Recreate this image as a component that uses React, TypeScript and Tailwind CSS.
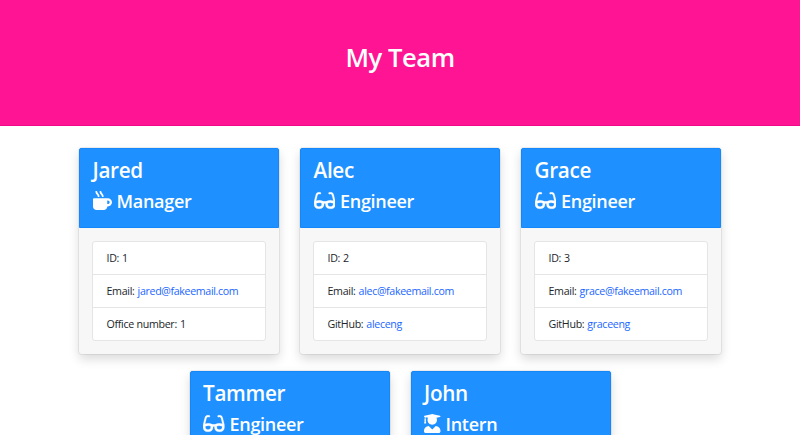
import type { IconType } from 'react-icons';
import { FaGlasses, FaMugHot, FaUserGraduate } from 'react-icons/fa';

type Detail = { label: string; value: string; link?: boolean };

type Member = {
  name: string;
  role: string;
  details: Detail[];
};

const icons: Record<string, { Icon: IconType; size: string }> = {
  Manager: { Icon: FaMugHot, size: 'mb-[2px] h-[19px] w-[19px]' },
  Engineer: { Icon: FaGlasses, size: 'mb-px h-[19px] w-[21.5px] stroke-white stroke-[6px]' },
  Intern: { Icon: FaUserGraduate, size: 'mb-px h-[19px] w-[16.5px]' },
};

const team: Member[] = [
  {
    name: 'Jared',
    role: 'Manager',
    details: [
      { label: 'ID:', value: '1' },
      { label: 'Email:', value: 'jared@fakeemail.com', link: true },
      { label: 'Office number:', value: '1' },
    ],
  },
  {
    name: 'Alec',
    role: 'Engineer',
    details: [
      { label: 'ID:', value: '2' },
      { label: 'Email:', value: 'alec@fakeemail.com', link: true },
      { label: 'GitHub:', value: 'aleceng', link: true },
    ],
  },
  {
    name: 'Grace',
    role: 'Engineer',
    details: [
      { label: 'ID:', value: '3' },
      { label: 'Email:', value: 'grace@fakeemail.com', link: true },
      { label: 'GitHub:', value: 'graceeng', link: true },
    ],
  },
  { name: 'Tammer', role: 'Engineer', details: [] },
  { name: 'John', role: 'Intern', details: [] },
];

function Card({ member }: { member: Member }) {
  const { name, role, details } = member;
  const { Icon, size } = icons[role];
  return (
    <article className="h-[205.5px] w-[200px] rounded-[3px] bg-[#f7f7f7] shadow-[0_0_0_1px_rgba(0,0,0,0.06),0_5px_11px_rgba(0,0,0,0.15)]">
      <header className="h-[80px] rounded-t-[2px] border border-[#1488fa] bg-[#1e90ff] px-[12.5px] pt-[8px] text-white">
        <h2 className="text-[20.7px] leading-[26px] font-semibold tracking-[-0.3px]">{name}</h2>
        <h3 className="mt-[6px] flex h-[24px] items-center gap-[5px] text-[18px] leading-[24px] font-semibold tracking-[-0.3px]">
          <Icon className={size} />
          <span>{role}</span>
        </h3>
      </header>
      {details.length > 0 && (
        <div className="px-[13px] pt-[13.4px]">
          <ul className="divide-y divide-[#e5e5e5] rounded-[3px] border border-[#e5e5e5] bg-white text-[10.67px] tracking-[-0.35px] text-[#212529]">
            {details.map(({ label, value, link }) => (
              <li key={label} className="flex h-[32.67px] items-center gap-[3px] px-[13.5px]">
                <span className="tracking-[-0.3px]">{label}</span>
                <span className={link ? 'text-[#1a66ff]' : ''}>{value}</span>
              </li>
            ))}
          </ul>
        </div>
      )}
    </article>
  );
}

export default function App() {
  return (
    <div className="h-[435px] overflow-hidden bg-white font-['Open_Sans',sans-serif]">
      <div className="flex h-[126px] items-center justify-center border-b border-[#f00c88] bg-[#ff1493] pb-[9px]">
        <h1 className="text-[25.6px] leading-8 font-semibold tracking-[-0.45px] text-white">My Team</h1>
      </div>
      <main className="flex flex-wrap justify-center gap-x-[21px] gap-y-[17.5px] px-[60px] pt-[22px]">
        {team.map((member) => (
          <Card key={member.name} member={member} />
        ))}
      </main>
    </div>
  );
}
